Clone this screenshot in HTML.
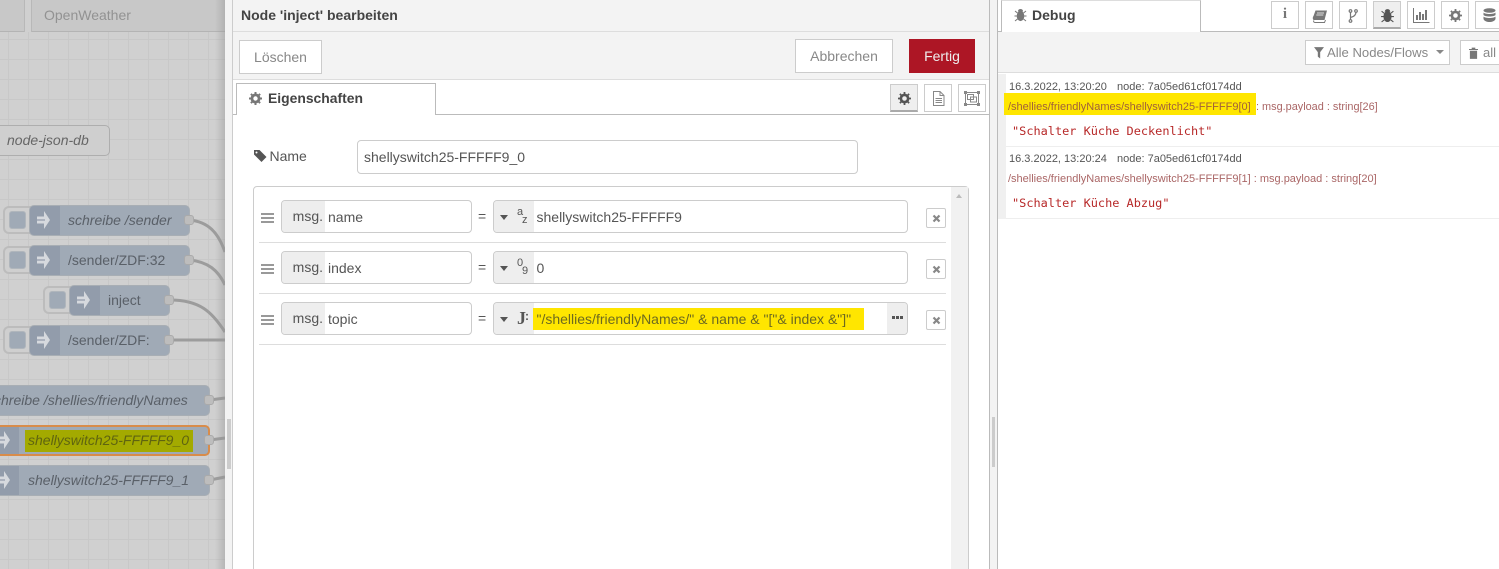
<!DOCTYPE html>
<html><head><meta charset="utf-8"><style>
*{box-sizing:border-box}
html,body{margin:0;padding:0;width:1499px;height:569px;overflow:hidden;background:#fff;font-family:"Liberation Sans",sans-serif;font-size:14px;color:#555}
#w{position:relative;width:1499px;height:569px;overflow:hidden}
.a{position:absolute}
.t{position:absolute;white-space:nowrap}
.node{position:absolute;height:31px;background:#a0aab6;border:1px solid #a8aeb4;border-radius:5px;overflow:hidden}
.node .ic{position:absolute;left:0;top:0;bottom:0;background:#929cab}
.lbl{position:absolute;white-space:nowrap;font-size:14px;color:#5a6068;font-style:italic;line-height:29px;top:0}
.port{position:absolute;width:10px;height:10px;background:#bdbdbd;border:1px solid #aaa;border-radius:3px}
.btnw{position:absolute;width:40px;height:28px;background:#cfcfcf;border:2px solid #bcbcbc;border-right:0;border-radius:6px 0 0 6px}
.btnw i{position:absolute;left:4px;top:3px;width:17px;height:18px;background:#a0aab6;border:1px solid #b0b6bc;border-radius:3px}
.btn{position:absolute;border:1px solid #ccc;background:#fff;color:#888;text-align:center;font-size:14px}
.ib{position:absolute;top:84px;width:28px;height:28px;border:1px solid #ccc;background:#fff}
.sb{position:absolute;top:1px;width:28px;height:28px;border:1px solid #ccc;background:#fff}
.inp{position:absolute;height:33px;border:1px solid #ccc;border-radius:4px;background:#fff;overflow:hidden}
.msg{position:absolute;left:0;top:0;bottom:0;width:43px;background:#eee;color:#555;line-height:31px;text-align:right;padding-right:2px;font-size:14px}
.val{position:absolute;white-space:nowrap;line-height:32px;font-size:14px;color:#555;top:0}
.sep{position:absolute;left:259px;width:687px;height:1px;background:#ddd}
.eq{position:absolute;left:478px;font-size:14px;color:#555}
.x{position:absolute;left:926px;width:20px;height:20px;border:1px solid #ccc;border-radius:2px;background:#fff}
.x svg{position:absolute;left:5px;top:5px}
.drag{position:absolute;left:261px;width:13px;height:10px;border-top:2px solid #999;border-bottom:2px solid #999}
.drag:after{content:"";position:absolute;left:0;right:0;top:2px;height:2px;background:#999}
.dbg{position:absolute;white-space:nowrap;font-size:11px}
.code{position:absolute;white-space:nowrap;font:11.9px "DejaVu Sans Mono","Liberation Mono",monospace;color:#b72828}
.arr{position:absolute;overflow:visible}
</style></head><body><div id="w">

<!-- canvas -->
<div class="a" style="left:0;top:0;width:225px;height:569px;background-color:#d0d0d0;background-image:linear-gradient(#c8c8c8 1px,transparent 1px),linear-gradient(90deg,#c8c8c8 1px,transparent 1px);background-size:20px 20px;background-position:8px 19px"></div>
<div class="a" style="left:0;top:0;width:225px;height:32px;background:#c8c8c8;border-bottom:1px solid #b4b4b4"></div>
<div class="a" style="left:24px;top:0;width:8px;height:32px;background:#d0d0d0;border-left:1px solid #b8b8b8;border-right:1px solid #b8b8b8"></div>
<div class="t" style="left:44px;top:7px;color:#929292;font-size:14px">OpenWeather</div>

<div class="a" style="left:-10px;top:125px;width:120px;height:31px;background:#cfcfcf;border:1px solid #aeaeae;border-radius:5px"></div>
<div class="t" style="left:7px;top:132px;color:#666;font-style:italic;font-size:14px">node-json-db</div>

<!-- wires -->
<svg class="a" style="left:0;top:0" width="225" height="569" fill="none" stroke="#9c9c9c" stroke-width="3">
<path d="M190 220C208 222 218 232 225 252"/>
<path d="M190 260C208 262 218 270 225 285"/>
<path d="M170 300C200 300 212 312 225 332"/>
<path d="M170 340H225"/>
<path d="M210 400L225 398"/>
<path d="M210 440L225 438"/>
<path d="M210 480L225 477"/>
</svg>

<!-- nodes -->
<div class="btnw" style="left:3px;top:206px"><i></i></div>
<div class="node" style="left:29px;top:205px;width:161px"><div class="ic" style="width:30px"></div><div class="lbl" style="left:38px">schreibe /sender</div>
<svg class="arr" style="left:7px;top:5px" width="13" height="18"><path d="M0 5.500H7V0L13 9L7 18V12.500H0Z" fill="#d6d9de"/><path d="M0 9H8" stroke="#929cab" stroke-width="1.200"/></svg></div>
<div class="port" style="left:184px;top:215px"></div>

<div class="btnw" style="left:3px;top:246px"><i></i></div>
<div class="node" style="left:29px;top:245px;width:161px"><div class="ic" style="width:30px"></div><div class="lbl" style="left:38px;font-style:normal">/sender/ZDF:32</div>
<svg class="arr" style="left:7px;top:5px" width="13" height="18"><path d="M0 5.500H7V0L13 9L7 18V12.500H0Z" fill="#d6d9de"/><path d="M0 9H8" stroke="#929cab" stroke-width="1.200"/></svg></div>
<div class="port" style="left:184px;top:255px"></div>

<div class="btnw" style="left:43px;top:286px"><i></i></div>
<div class="node" style="left:69px;top:285px;width:101px"><div class="ic" style="width:30px"></div><div class="lbl" style="left:38px;font-style:normal">inject</div>
<svg class="arr" style="left:7px;top:5px" width="13" height="18"><path d="M0 5.500H7V0L13 9L7 18V12.500H0Z" fill="#d6d9de"/><path d="M0 9H8" stroke="#929cab" stroke-width="1.200"/></svg></div>
<div class="port" style="left:164px;top:295px"></div>

<div class="btnw" style="left:3px;top:326px"><i></i></div>
<div class="node" style="left:29px;top:325px;width:141px"><div class="ic" style="width:30px"></div><div class="lbl" style="left:38px;font-style:normal">/sender/ZDF:</div>
<svg class="arr" style="left:7px;top:5px" width="13" height="18"><path d="M0 5.500H7V0L13 9L7 18V12.500H0Z" fill="#d6d9de"/><path d="M0 9H8" stroke="#929cab" stroke-width="1.200"/></svg></div>
<div class="port" style="left:164px;top:335px"></div>

<div class="node" style="left:-20px;top:385px;width:230px"></div>
<div class="t" style="left:-13px;top:392px;font-style:italic;color:#5a6068;font-size:14px">schreibe /shellies/friendlyNames</div>
<div class="port" style="left:204px;top:395px"></div>

<div class="node" style="left:-20px;top:425px;width:230px;border:2px solid #d88c4a"><div class="ic" style="width:37px"></div>
<svg class="arr" style="left:15px;top:4px" width="13" height="18"><path d="M0 5.500H7V0L13 9L7 18V12.500H0Z" fill="#d6d9de"/><path d="M0 9H8" stroke="#929cab" stroke-width="1.200"/></svg></div>
<div class="a" style="left:25px;top:430px;width:168px;height:22px;background:#a3aa00"></div>
<div class="t" style="left:28px;top:432px;font-style:italic;color:#5f6410;font-size:14px">shellyswitch25-FFFFF9_0</div>
<div class="port" style="left:204px;top:435px"></div>

<div class="node" style="left:-20px;top:465px;width:230px"><div class="ic" style="width:38px"></div>
<svg class="arr" style="left:16px;top:5px" width="13" height="18"><path d="M0 5.500H7V0L13 9L7 18V12.500H0Z" fill="#d6d9de"/><path d="M0 9H8" stroke="#929cab" stroke-width="1.200"/></svg></div>
<div class="t" style="left:28px;top:472px;font-style:italic;color:#5a6068;font-size:14px">shellyswitch25-FFFFF9_1</div>
<div class="port" style="left:204px;top:475px"></div>

<div class="a" style="left:215px;top:0;width:10px;height:569px;background:linear-gradient(90deg,rgba(150,150,150,0),rgba(150,150,150,.45))"></div>

<!-- left separator -->
<div class="a" style="left:225px;top:0;width:8px;height:569px;background:#f3f3f3;border-right:1px solid #ccc"></div>
<div class="a" style="left:227px;top:419px;width:4px;height:50px;background:#ccc"></div>

<!-- editor panel -->
<div class="a" style="left:233px;top:0;width:756px;height:32px;background:#f3f3f3;border-bottom:1px solid #ddd"></div>
<div class="t" style="left:241px;top:7px;font-weight:bold;font-size:14px;color:#444">Node 'inject' bearbeiten</div>
<div class="a" style="left:233px;top:32px;width:756px;height:48px;background:#f3f3f3;border-bottom:1px solid #ddd"></div>
<div class="btn" style="left:239px;top:40px;width:83px;height:34px;line-height:33px">Löschen</div>
<div class="btn" style="left:795px;top:39px;width:98px;height:34px;line-height:33px">Abbrechen</div>
<div class="a" style="left:909px;top:39px;width:66px;height:34px;background:#ad1625;color:#eee;text-align:center;line-height:35px;font-size:14px">Fertig</div>

<!-- tabs -->
<div class="a" style="left:233px;top:114px;width:756px;height:1px;background:#bbb"></div>
<div class="a" style="left:236px;top:83px;width:200px;height:32px;background:#fff;border:1px solid #bbb;border-bottom:0"></div>
<svg class="a" style="left:249px;top:92px" width="13" height="13" viewBox="0 0 13 13"><circle cx="6.500" cy="6.500" r="3.600" fill="none" stroke="#777" stroke-width="2.800"/><path d="M6.500 0V13M0 6.500H13M1.900 1.900L11.100 11.100M11.100 1.900L1.900 11.100" stroke="#777" stroke-width="2" stroke-dasharray="2.200 8.600"/></svg>
<div class="t" style="left:268px;top:90px;font-weight:bold;font-size:13.900px;color:#444">Eigenschaften</div>

<div class="ib" style="left:890px;background:#efefef;border-bottom:2px solid #aaa"><svg class="a" style="left:7px;top:7px" width="13" height="13" viewBox="0 0 13 13"><circle cx="6.500" cy="6.500" r="3.600" fill="none" stroke="#555" stroke-width="2.600"/><path d="M6.500 0V13M0 6.500H13M1.900 1.900L11.100 11.100M11.100 1.900L1.900 11.100" stroke="#555" stroke-width="1.800" stroke-dasharray="2.200 8.600"/></svg></div>
<div class="ib" style="left:924px"><svg class="a" style="left:7px;top:6px" width="13" height="15" viewBox="0 0 13 15" fill="none" stroke="#888"><path d="M1.500 .5H8L12 4.500V14.500H1.500ZM8 .5V4.500H12M3.500 7.500H10M3.500 9.500H10M3.500 11.500H10"/></svg></div>
<div class="ib" style="left:958px"><svg class="a" style="left:5px;top:6px" width="16" height="15" viewBox="0 0 16 15" fill="none" stroke="#888"><rect x="1.500" y="1.500" width="13" height="12"/><rect x="3.500" y="3.500" width="6" height="5"/><rect x="6.500" y="6" width="6" height="5"/><path d="M0 0h3v3H0zM13 0h3v3h-3zM0 12h3v3H0zM13 12h3v3h-3z" fill="#888" stroke="none"/></svg></div>

<!-- name row -->
<svg class="a" style="left:253px;top:149px" width="14" height="13" viewBox="0 0 14 13"><path d="M1 1H6.500L13.500 8L8.500 13L1 5.500Z" fill="#555"/><circle cx="3.500" cy="3.500" r="1" fill="#fff"/></svg>
<div class="t" style="left:269.500px;top:148px;font-size:14px;color:#555">Name</div>
<div class="inp" style="left:357px;top:140px;width:501px;height:34px"><div class="val" style="left:6px;line-height:33px">shellyswitch25-FFFFF9_0</div></div>

<!-- rules list -->
<div class="a" style="left:253px;top:186px;width:716px;height:400px;border:1px solid #ccc;border-radius:4px 4px 0 0;background:#fff"></div>
<div class="a" style="left:951px;top:187px;width:17px;height:382px;background:#f1f1f1"></div>
<div class="a" style="left:956px;top:194px;width:0;height:0;border:3.500px solid transparent;border-bottom:4px solid #bbb;border-top:0"></div>

<div class="drag" style="top:213px"></div>
<div class="inp" style="left:281px;top:200px;width:191px"><div class="msg">msg.</div><div class="val" style="left:46px">name</div></div>
<div class="eq" style="top:208px">=</div>
<div class="inp" style="left:493px;top:200px;width:415px"><div class="msg" style="width:40px"></div>
<div class="a" style="left:6px;top:14px;border:4px solid transparent;border-top:5px solid #555;border-bottom:0"></div>
<div class="t" style="left:23px;top:5px;font-size:11px;color:#555">a</div><div class="t" style="left:28px;top:13px;font-size:11px;color:#555">z</div>
<div class="val" style="left:42.500px">shellyswitch25-FFFFF9</div></div>
<div class="x" style="top:208px"><svg width="9" height="9" viewBox="0 0 9 9"><path d="M1.500 1.500L7.500 7.500M7.500 1.500L1.500 7.500" stroke="#888" stroke-width="2.200"/></svg></div>
<div class="sep" style="top:242px"></div>

<div class="drag" style="top:264px"></div>
<div class="inp" style="left:281px;top:251px;width:191px"><div class="msg">msg.</div><div class="val" style="left:46px">index</div></div>
<div class="eq" style="top:259px">=</div>
<div class="inp" style="left:493px;top:251px;width:415px"><div class="msg" style="width:40px"></div>
<div class="a" style="left:6px;top:14px;border:4px solid transparent;border-top:5px solid #555;border-bottom:0"></div>
<div class="t" style="left:23px;top:5px;font-size:11px;color:#555">0</div><div class="t" style="left:28px;top:13px;font-size:11px;color:#555">9</div>
<div class="val" style="left:42.500px">0</div></div>
<div class="x" style="top:259px"><svg width="9" height="9" viewBox="0 0 9 9"><path d="M1.500 1.500L7.500 7.500M7.500 1.500L1.500 7.500" stroke="#888" stroke-width="2.200"/></svg></div>
<div class="sep" style="top:293px"></div>

<div class="drag" style="top:315px"></div>
<div class="inp" style="left:281px;top:302px;width:191px"><div class="msg">msg.</div><div class="val" style="left:46px">topic</div></div>
<div class="eq" style="top:310px">=</div>
<div class="inp" style="left:493px;top:302px;width:415px"><div class="msg" style="width:40px"></div>
<div class="a" style="left:6px;top:14px;border:4px solid transparent;border-top:5px solid #555;border-bottom:0"></div>
<div class="t" style="left:23px;top:5px;font:bold 18px 'Liberation Serif',serif;color:#555">J</div>
<div class="t" style="left:31px;top:6px;font:bold 12px 'Liberation Sans',sans-serif;color:#555">:</div>
<div class="a" style="left:39px;top:5px;width:331px;height:22px;background:#ffe600"></div>
<div class="val" style="left:42.500px;color:#6d6a20">"/shellies/friendlyNames/" &amp; name &amp; "["&amp; index &amp;"]"</div>
<div class="a" style="right:0;top:0;bottom:0;width:20px;background:#eee"></div>
<div class="a" style="right:4px;top:13px;width:11px;height:3px;background-image:linear-gradient(90deg,#555 3px,transparent 3px);background-size:4px 3px"></div></div>
<div class="x" style="top:310px"><svg width="9" height="9" viewBox="0 0 9 9"><path d="M1.500 1.500L7.500 7.500M7.500 1.500L1.500 7.500" stroke="#888" stroke-width="2.200"/></svg></div>
<div class="sep" style="top:344px"></div>

<!-- panel divider -->
<div class="a" style="left:989px;top:0;width:9px;height:569px;background:#f3f3f3;border-left:1px solid #bbb;border-right:1px solid #bbb"></div>
<div class="a" style="left:992px;top:417px;width:3px;height:50px;background:#ccc"></div>

<!-- debug panel -->
<div class="a" style="left:998px;top:31px;width:501px;height:1px;background:#bbb"></div>
<div class="a" style="left:1001px;top:0;width:200px;height:32px;background:#fff;border:1px solid #bbb;border-top:1px solid #ddd;border-bottom:0"></div>
<svg class="a" style="left:1014px;top:8px" width="13" height="14" viewBox="0 0 13 14" fill="none" stroke="#777"><ellipse cx="6.500" cy="8" rx="3.300" ry="4.600" fill="#777"/><path d="M4.500 3C5 1 8 1 8.500 3ZM1 3L3.500 5M12 3L9.500 5M0.500 8H3M10 8H12.500M1 13L3.500 11M12 13L9.500 11" fill="#777"/></svg>
<div class="t" style="left:1032px;top:7px;font-weight:bold;font-size:14px;color:#444">Debug</div>

<div class="sb" style="left:1271px"><div class="a" style="left:0;right:0;top:4px;text-align:center;font:bold 15px 'Liberation Serif',serif;color:#777">i</div></div>
<div class="sb" style="left:1305px"><svg class="a" style="left:6px;top:8px" width="16" height="13" viewBox="0 0 16 13"><path d="M3.500 .5H15L12.500 10H2C.5 10 .5 7 1.500 6Z" fill="#777"/><path d="M2 10.500C1 11.500 2 12.500 3 12.500H12.500L13.500 10" stroke="#777" fill="none"/><path d="M5 3H12M4.300 5H11.300" stroke="#fff" stroke-width=".8"/></svg></div>
<div class="sb" style="left:1339px"><svg class="a" style="left:8px;top:7px" width="10" height="14" viewBox="0 0 10 14" fill="none" stroke="#777" stroke-width="1.200"><path d="M2.500 3V11M2.500 8.500C7 7.500 8 5.500 8 3"/><circle cx="2.500" cy="2" r="1.300"/><circle cx="2.500" cy="12" r="1.300"/><circle cx="8" cy="2" r="1.300"/></svg></div>
<div class="sb" style="left:1373px;background:#efefef;border-bottom:2px solid #aaa"><svg class="a" style="left:6px;top:6px" width="15" height="15" viewBox="0 0 13 14" fill="none" stroke="#555"><ellipse cx="6.500" cy="8" rx="3.300" ry="4.600" fill="#555"/><path d="M4.500 3C5 1 8 1 8.500 3ZM1 3L3.500 5M12 3L9.500 5M0.500 8H3M10 8H12.500M1 13L3.500 11M12 13L9.500 11" fill="#555"/></svg></div>
<div class="sb" style="left:1407px"><svg class="a" style="left:5px;top:6px" width="17" height="15" viewBox="0 0 17 15" fill="none" stroke="#777"><path d="M.5 0V14.500H16.500"/><path d="M4 12V7M7 12V4M10 12V6M13 12V2" stroke-width="2"/></svg></div>
<div class="sb" style="left:1441px"><svg class="a" style="left:7px;top:7px" width="13" height="13" viewBox="0 0 13 13"><circle cx="6.500" cy="6.500" r="3.600" fill="none" stroke="#777" stroke-width="2.600"/><path d="M6.500 0V13M0 6.500H13M1.900 1.900L11.100 11.100M11.100 1.900L1.900 11.100" stroke="#777" stroke-width="1.800" stroke-dasharray="2.200 8.600"/></svg></div>
<div class="sb" style="left:1475px;width:30px"><svg class="a" style="left:7px;top:6px" width="13" height="15" viewBox="0 0 13 15" fill="#777"><ellipse cx="6.500" cy="2.500" rx="6" ry="2.300"/><path d="M.5 4.500C2 6.500 11 6.500 12.500 4.500V7C11 9 2 9 .5 7ZM.5 8.500C2 10.500 11 10.500 12.500 8.500V11C11 15 2 15 .5 11Z"/></svg></div>

<div class="a" style="left:998px;top:32px;width:501px;height:41px;background:#f3f3f3;border-bottom:1px solid #ddd"></div>
<div class="a" style="left:1305px;top:40px;width:145px;height:25px;background:#fff;border:1px solid #ccc"></div>
<svg class="a" style="left:1314px;top:47px" width="10" height="12" viewBox="0 0 11 13"><path d="M0 0H11L6.800 5.500V12.500L4.200 10.500V5.500Z" fill="#777"/></svg>
<div class="t" style="left:1327px;top:45px;font-size:13.100px;color:#888">Alle Nodes/Flows</div>
<div class="a" style="left:1436px;top:50px;border:4px solid transparent;border-top:4.500px solid #888;border-bottom:0"></div>
<div class="a" style="left:1460px;top:40px;width:45px;height:25px;background:#fff;border:1px solid #ccc"></div>
<svg class="a" style="left:1469px;top:47px" width="9" height="12" viewBox="0 0 10 13"><path d="M0 2H10V3.200H0ZM3 .5H7V2H3ZM1 4H9V13H1Z" fill="#777"/></svg>
<div class="t" style="left:1483px;top:45px;font-size:13px;color:#888">all</div>

<!-- debug messages -->
<div class="a" style="left:998px;top:74px;width:8px;height:145px;background:#f0f0f0"></div>
<div class="a" style="left:1006px;top:146px;width:493px;height:1px;background:#eee"></div>
<div class="a" style="left:1006px;top:218px;width:493px;height:1px;background:#eee"></div>

<div class="dbg" style="left:1009px;top:81px;color:#555">16.3.2022, 13:20:20</div>
<div class="dbg" style="left:1117px;top:81px;color:#555">node: 7a05ed61cf0174dd</div>
<div class="a" style="left:1004px;top:93px;width:252px;height:22px;background:#ffe600"></div>
<div class="dbg" style="left:1008px;top:101px;color:#a0603a">/shellies/friendlyNames/shellyswitch25-FFFFF9[0]</div>
<div class="dbg" style="left:1256px;top:101px;color:#a66;font-size:10.900px">: msg.payload : string[26]</div>
<div class="code" style="left:1012px;top:124px">"Schalter Küche Deckenlicht"</div>

<div class="dbg" style="left:1009px;top:153px;color:#555">16.3.2022, 13:20:24</div>
<div class="dbg" style="left:1117px;top:153px;color:#555">node: 7a05ed61cf0174dd</div>
<div class="dbg" style="left:1008px;top:173px;color:#a66">/shellies/friendlyNames/shellyswitch25-FFFFF9[1] : msg.payload : string[20]</div>
<div class="code" style="left:1012px;top:196px">"Schalter Küche Abzug"</div>

</div></body></html>
